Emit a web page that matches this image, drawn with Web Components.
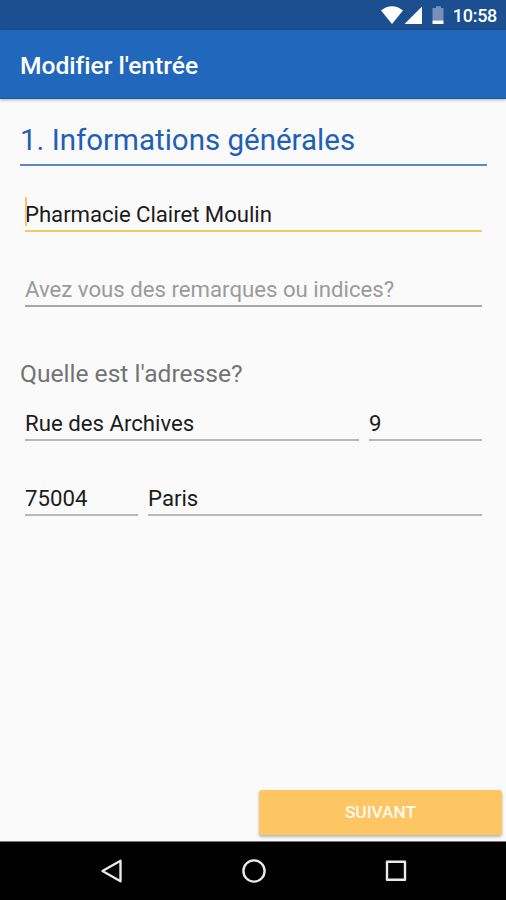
<!DOCTYPE html>
<html lang="fr">
<head>
<meta charset="utf-8">
<title>Modifier l'entrée</title>
<style>
    html, body {
        height: 100%;
    }
    body {
        margin: 0;
        overflow: hidden;
        font-family: Roboto, "Liberation Sans", sans-serif;
        background: #fafafa;
    }
</style>
</head>
<body>
<entry-screen></entry-screen>

<script>
class StatusBar extends HTMLElement {
    constructor() {
        super();
        this.attachShadow({ mode: 'open' });
    }

    connectedCallback() {
        this.shadowRoot.innerHTML = `
            <style>
                :host {
                    display: flex;
                    justify-content: flex-end;
                    box-sizing: border-box;
                    height: 30px;
                    padding-right: 9px;
                    background: #1b4f8f;
                    color: #fff;
                }
                svg {
                    width: 71px;
                    height: 30px;
                    flex: none;
                    margin-right: 1px;
                }
                .time {
                    font-size: 18px;
                    font-weight: 500;
                    line-height: 32px;
                    letter-spacing: -0.3px;
                }
            </style>
            <svg viewBox="0 0 71 30">
                <path fill="#fff" d="M0 10.400C3.400 7.700 7 6.200 11 6.200s7.600 1.500 11 4.200L11 24z"/>
                <path fill="#fff" d="M41 6.500V24H23.500z"/>
                <path fill="#7690b8" d="M55 6.300h5v1.600h2.500v12.900h-11V7.900H55z"/>
                <path fill="#fff" d="M51.500 20.500h11V24h-11z"/>
            </svg>
            <span class="time"><slot></slot></span>
        `;
    }
}

class AppBar extends HTMLElement {
    constructor() {
        super();
        this.attachShadow({ mode: 'open' });
    }

    connectedCallback() {
        this.shadowRoot.innerHTML = `
            <style>
                :host {
                    display: flex;
                    align-items: center;
                    box-sizing: border-box;
                    height: 69px;
                    padding: 2px 20px 0;
                    background: #2168bd;
                    border-bottom: 1px solid #1559ab;
                    box-shadow: 0 1px 3px rgba(0, 0, 0, 0.3);
                    color: #fff;
                    font-size: 24.600px;
                    font-weight: 500;
                    font-variant-ligatures: none;
                }
            </style>
            <slot></slot>
        `;
    }
}

class SectionTitle extends HTMLElement {
    constructor() {
        super();
        this.attachShadow({ mode: 'open' });
    }

    connectedCallback() {
        this.shadowRoot.innerHTML = `
            <style>
                :host {
                    display: block;
                    box-sizing: border-box;
                    height: 49px;
                    border-bottom: 2px solid #5c86c4;
                    color: #1f5fb8;
                    font-size: 29.5px;
                    line-height: 46px;
                    white-space: nowrap;
                }
            </style>
            <slot></slot>
        `;
    }
}

class TextField extends HTMLElement {
    constructor() {
        super();
        this.attachShadow({ mode: 'open' });
    }

    connectedCallback() {
        this.shadowRoot.innerHTML = `
            <style>
                :host {
                    display: flex;
                    align-items: flex-start;
                    box-sizing: border-box;
                    height: 36px;
                    border-bottom: 2px solid #b8b8b8;
                    color: #1c1c1c;
                    font-size: 22.200px;
                    line-height: 36px;
                    white-space: nowrap;
                    position: relative;
                }
                :host([hint]) {
                    border-bottom-color: #a6a6a6;
                    color: #9b9b9b;
                }
                :host([focused]) {
                    border-bottom-color: #fcc560;
                    letter-spacing: -0.05px;
                }
                /* text cursor, drawn over the first letter */
                .caret {
                    display: none;
                    position: absolute;
                    left: 0;
                    top: 1px;
                    width: 2px;
                    height: 29px;
                    background: #fcc560;
                }
                :host([focused]) .caret {
                    display: block;
                }
            </style>
            <slot></slot>
            <i class="caret"></i>
        `;
    }
}

class RaisedButton extends HTMLElement {
    constructor() {
        super();
        this.attachShadow({ mode: 'open' });
    }

    connectedCallback() {
        this.shadowRoot.innerHTML = `
            <style>
                :host {
                    display: block;
                }
                button {
                    display: block;
                    width: 100%;
                    height: 45px;
                    padding: 0 0 1px;
                    border: 0;
                    border-radius: 3px;
                    background: #fec663;
                    box-shadow: 0 2px 3px rgba(0, 0, 0, 0.28);
                    color: #fffaf0;
                    font: 500 17.300px Roboto, sans-serif;
                    text-transform: uppercase;
                }
            </style>
            <button type="button"><slot></slot></button>
        `;
    }
}

class NavBar extends HTMLElement {
    constructor() {
        super();
        this.attachShadow({ mode: 'open' });
    }

    connectedCallback() {
        this.shadowRoot.innerHTML = `
            <style>
                :host {
                    display: flex;
                    justify-content: center;
                    align-items: center;
                    gap: 112px;
                    box-sizing: border-box;
                    height: 59px;
                    border-top: 1px solid #777;
                    background: #000;
                }
                svg {
                    width: 30px;
                    height: 30px;
                    fill: none;
                    stroke: #e9e9e9;
                    stroke-width: 2.400;
                    stroke-linejoin: round;
                }
            </style>
            <svg viewBox="0 0 30 30"><path d="M24.500 4.800v20.400L6.500 15z"/></svg>
            <svg viewBox="0 0 30 30"><circle cx="16" cy="15" r="10.600"/></svg>
            <svg viewBox="0 0 30 30"><path d="M7 5.700h18v18H7z"/></svg>
        `;
    }
}

class EntryScreen extends HTMLElement {
    constructor() {
        super();
        this.attachShadow({ mode: 'open' });
    }

    connectedCallback() {
        this.shadowRoot.innerHTML = `
            <style>
                :host {
                    display: flex;
                    flex-direction: column;
                    height: 100vh;
                }
                main {
                    flex: 1;
                    display: flex;
                    flex-direction: column;
                    padding: 18px 19px 0 20px;
                }
                .group {
                    display: flex;
                    flex-direction: column;
                    gap: 39px;
                    padding: 0 5px;
                }
                .name {
                    margin-top: 30px;
                }
                .row {
                    display: grid;
                    gap: 10px;
                }
                .street {
                    grid-template-columns: 1fr 113px;
                }
                .city {
                    grid-template-columns: 113px 1fr;
                }
                .label {
                    margin: 51px 0 15px;
                    color: #737373;
                    font-size: 24.600px;
                    font-weight: 400;
                    line-height: 32px;
                }
                .actions {
                    display: flex;
                    justify-content: flex-end;
                    padding: 0 4px 6px;
                }
                raised-button {
                    width: 243px;
                }
            </style>
            <status-bar>10:58</status-bar>
            <app-bar>Modifier l'entrée</app-bar>
            <main>
                <section-title>1. Informations générales</section-title>
                <div class="group name">
                    <text-field focused>Pharmacie Clairet Moulin</text-field>
                    <text-field hint>Avez vous des remarques ou indices?</text-field>
                </div>
                <div class="label">Quelle est l'adresse?</div>
                <div class="group">
                    <div class="row street">
                        <text-field>Rue des Archives</text-field>
                        <text-field>9</text-field>
                    </div>
                    <div class="row city">
                        <text-field>75004</text-field>
                        <text-field>Paris</text-field>
                    </div>
                </div>
            </main>
            <div class="actions">
                <raised-button>Suivant</raised-button>
            </div>
            <nav-bar></nav-bar>
        `;
    }
}

customElements.define('status-bar', StatusBar);
customElements.define('app-bar', AppBar);
customElements.define('section-title', SectionTitle);
customElements.define('text-field', TextField);
customElements.define('raised-button', RaisedButton);
customElements.define('nav-bar', NavBar);
customElements.define('entry-screen', EntryScreen);
</script>
</body>
</html>
